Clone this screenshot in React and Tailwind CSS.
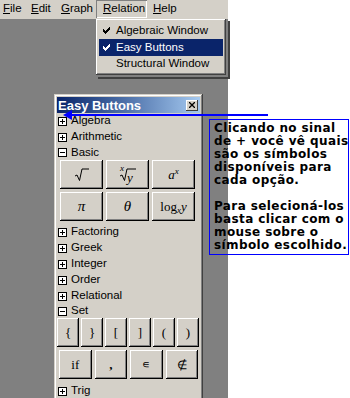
import React from "react";

const face = "bg-[#d4d0c8]";
const raised =
  "shadow-[inset_-1px_-1px_0_#000,inset_1px_1px_0_#fff,inset_-2px_-2px_0_#808080]";

function Btn({ children, className = "" }) {
  return (
    <div
      className={`${face} ${raised} flex items-center justify-center text-black ${className}`}
    >
      {children}
    </div>
  );
}

function Box({ open }) {
  return (
    <div className="w-[9px] h-[9px] border border-black bg-white relative shrink-0">
      <div className="absolute left-[1px] top-[3px] w-[5px] h-[1px] bg-black" />
      {!open && <div className="absolute left-[3px] top-[1px] w-[1px] h-[5px] bg-black" />}
    </div>
  );
}

function Row({ label, open, h = "h-[16px]" }) {
  return (
    <div className={`flex items-center ${h} pl-[1px] gap-[4px]`}>
      <Box open={open} />
      <span className="text-[11.5px] leading-none text-black">{label}</span>
    </div>
  );
}

function Check() {
  return (
    <svg width="7" height="7" viewBox="0 0 7 7" className="shrink-0">
      <path d="M0 2h1v1h1v1h1V3h1V2h1V1h1V0h1v3h-1v1h-1v1h-1v1h-1v1H2V6H1V5H0z" fill="currentColor" />
    </svg>
  );
}

function Radical({ w = 16 }) {
  return (
    <svg width={w} height="14" viewBox={`0 0 ${w} 14`}>
      <path d={`M1 8 L3 7 L5.5 12.5 L8 1 L${w} 1`} fill="none" stroke="#000" strokeWidth="1" />
    </svg>
  );
}

export default function App() {
  const sans = { fontFamily: '"Liberation Sans", Arial, sans-serif' };
  const serif = { fontFamily: '"Liberation Serif", "Times New Roman", serif' };
  return (
    <div className="w-[350px] h-[398px] relative overflow-hidden bg-white flex" style={sans}>
      {/* left app area */}
      <div className="w-[228px] h-full flex flex-col">
        {/* menubar */}
        <div className={`h-[19px] ${face} flex items-start text-[11.5px] text-black shrink-0`}>
          <div className="w-[24px] pl-[3px] h-[18px] flex items-center"><span><u>F</u>ile</span></div>
          <div className="w-[30px] pl-[7px] h-[18px] flex items-center"><span><u>E</u>dit</span></div>
          <div className="w-[42px] pl-[7px] h-[18px] flex items-center"><span><u>G</u>raph</span></div>
          <div className="w-[51px] pl-[7px] h-[18px] flex items-center shadow-[inset_1px_1px_0_#808080,inset_-1px_-1px_0_#fff]"><span><u>R</u>elation</span></div>
          <div className="w-[33px] pl-[6px] h-[18px] flex items-center"><span><u>H</u>elp</span></div>
        </div>
        {/* desktop */}
        <div className="flex-1 bg-[#808080] pt-[75px] pl-[54px]">
          <div className={`w-[149px] h-[320px] ${face} p-[3px] shadow-[inset_-1px_-1px_0_#404040,inset_1px_1px_0_#d4d0c8,inset_-2px_-2px_0_#808080,inset_2px_2px_0_#fff]`}>
            <div className="h-[16px] bg-gradient-to-r from-[#0a246a] to-[#a6caf0] flex items-center justify-between pl-[1px] pr-[2px]">
              <span className="text-white font-bold text-[13px] leading-none">Easy Buttons</span>
              <div className={`w-[12px] h-[11px] ${face} shadow-[inset_-1px_-1px_0_#404040,inset_1px_1px_0_#fff] flex items-center justify-center`}>
                <svg width="6" height="6" viewBox="0 0 6 6"><path d="M0 0L6 6M6 0L0 6" stroke="#000" strokeWidth="1.3" /></svg>
              </div>
            </div>
            <Row label="Algebra" />
            <Row label="Arithmetic" />
            <Row label="Basic" open h="h-[15px]" />
            <div className="grid grid-cols-[43px_43px_43px] gap-[3px] pl-[3px]">
              <Btn className="h-[29px]"><Radical w={15} /></Btn>
              <Btn className="h-[29px]">
                <div className="relative flex items-end">
                  <span className="absolute -top-[4px] left-[1px] text-[9px] italic leading-none" style={serif}>x</span>
                  <Radical w={17} />
                  <span className="absolute left-[8px] top-[3px] text-[13px] italic leading-none" style={serif}>y</span>
                </div>
              </Btn>
              <Btn className="h-[29px]">
                <span className="text-[13px] italic" style={serif}>a<sup className="text-[9px]">x</sup></span>
              </Btn>
              <Btn className="h-[29px]"><span className="text-[15px] italic" style={serif}>π</span></Btn>
              <Btn className="h-[29px]"><span className="text-[15px] italic" style={serif}>θ</span></Btn>
              <Btn className="h-[29px]">
                <span className="text-[13px]" style={serif}>log<sub className="text-[9px] italic">x</sub><i>y</i></span>
              </Btn>
            </div>
            <div className="h-[3px]" />
            <Row label="Factoring" />
            <Row label="Greek" />
            <Row label="Integer" />
            <Row label="Order" />
            <Row label="Relational" />
            <Row label="Set" open h="h-[14px]" />
            <div className="grid grid-cols-6 gap-x-[2px] pr-[1px]">
              {["{", "}", "[", "]", "(", ")"].map((c) => (
                <Btn key={c} className="h-[29px]"><span className="text-[13px]" style={serif}>{c}</span></Btn>
              ))}
            </div>
            <div className="grid grid-cols-4 gap-x-[3px] pl-[2px] pr-[2px] mt-[3px]">
              <Btn className="h-[29px]"><span className="text-[13px]" style={serif}>if</span></Btn>
              <Btn className="h-[29px]"><span className="text-[13px] font-bold" style={serif}>,</span></Btn>
              <Btn className="h-[29px]"><span className="text-[11px]" style={serif}>∊</span></Btn>
              <Btn className="h-[29px]"><span className="text-[12px]" style={serif}>∉</span></Btn>
            </div>
            <div className="h-[4px]" />
            <Row label="Trig" />
          </div>
        </div>
      </div>

      {/* dropdown menu */}
      <div className="absolute left-[96px] top-[19px] w-[132px] h-[58px] shadow-[2px_2px_0_#404040]">
        <div className={`w-[130px] h-[56px] ${face} p-[3px] text-[11.5px] text-black shadow-[inset_-1px_-1px_0_#404040,inset_1px_1px_0_#fff,inset_-2px_-2px_0_#808080]`}>
          <div className="h-[17px] flex items-center pl-[4px] gap-[6px]"><Check /><span>Algebraic Window</span></div>
          <div className="h-[17px] flex items-center pl-[4px] gap-[6px] bg-[#0a246a] text-white"><Check /><span>Easy Buttons</span></div>
          <div className="h-[16px] flex items-center pl-[17px]"><span>Structural Window</span></div>
        </div>
      </div>

      {/* callout box */}
      <div
        className="absolute left-[209px] top-[119px] w-[140px] h-[136px] border border-[#0000ff] pl-[4px] pt-[2px] text-[12px] leading-[13px] font-bold tracking-[0.4px] text-black whitespace-nowrap"
        style={{ fontFamily: '"DejaVu Sans", Verdana, sans-serif' }}
      >
        <div>Clicando no sinal</div>
        <div>de + você vê quais</div>
        <div>são os símbolos</div>
        <div>disponíveis para</div>
        <div>cada opção.</div>
        <div className="h-[13px]" />
        <div>Para selecioná-los</div>
        <div>basta clicar com o</div>
        <div>mouse sobre o</div>
        <div>símbolo escolhido.</div>
      </div>

      {/* arrow */}
      <svg className="absolute left-0 top-0" width="350" height="398">
        <line x1="68" y1="115" x2="268" y2="115" stroke="#0000ff" strokeWidth="2" />
        <path d="M63 115 L72 110 L72 120 Z" fill="#0000ff" />
      </svg>
    </div>
  );
}
